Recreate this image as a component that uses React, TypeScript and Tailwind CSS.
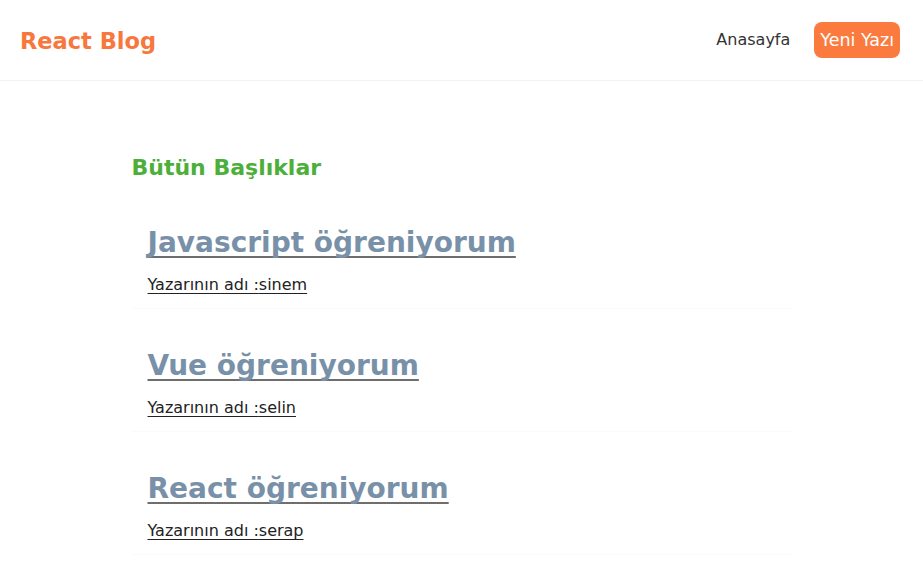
import React from "react";

const blogs = [
  { id: 1, title: "Javascript öğreniyorum", author: "sinem" },
  { id: 2, title: "Vue öğreniyorum", author: "selin" },
  { id: 3, title: "React öğreniyorum", author: "serap" },
];

export default function App() {
  return (
    <div
      className="min-h-screen bg-white text-[#333]"
      style={{ fontFamily: '"Comic Sans MS", "DejaVu Sans", sans-serif' }}
    >
      <nav className="flex h-[81px] items-center border-b border-[#f2f2f2] pl-5 pr-[23px]">
        <h1 className="mt-[3px] text-[22.5px] font-bold text-[#f7773d]">React Blog</h1>
        <div className="ml-auto flex items-center">
          <a className="text-[16px] text-[#333]">Anasayfa</a>
          <a className="ml-6 rounded-lg bg-[#fb7b3f] px-[6px] py-[6px] text-[17.5px] leading-[24px] text-white">
            Yeni Yazı
          </a>
        </div>
      </nav>
      <div className="mx-auto w-[660px] pt-[70px]">
        <h2 className="mt-[2px] text-[22px] font-bold leading-[30px] text-[#4caf3a]">Bütün Başlıklar</h2>
        <div className="mt-[23px]">
          {blogs.map((b) => (
            <div key={b.id} className="mb-[20px] border-b border-[#fafafa] px-[16px] pb-[13px] pt-[17px]">
              <a className="block w-fit text-[28px] font-bold leading-[40px] text-[#7891a8] underline decoration-[#6e6e6e] decoration-2 underline-offset-[4px] [text-decoration-skip-ink:none]">
                {b.title}
              </a>
              <p className="mt-[12px] w-fit text-[16px] leading-[20px] text-[#222] underline underline-offset-[3px] [text-decoration-skip-ink:none]">
                Yazarının adı :{b.author}
              </p>
            </div>
          ))}
        </div>
      </div>
    </div>
  );
}
